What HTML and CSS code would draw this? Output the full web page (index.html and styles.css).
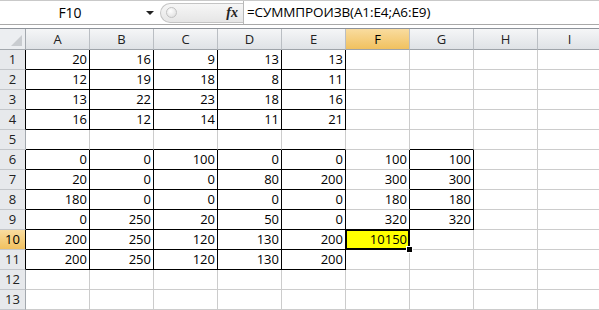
FILE: index.html
```html
<!DOCTYPE html>
<html lang="ru">
<head>
    <meta charset="UTF-8">
    <meta name="viewport" content="width=device-width, initial-scale=1.0">
    <title>СУММПРОИЗВ</title>
    <link rel="stylesheet" href="styles.css">
</head>
<body>
    <div class="fbar">
        <div class="namebox">F10</div>
        <div class="drop"><span class="arrow"></span></div>
        <div class="fx-area"><span class="grip"></span><span class="fx">fx</span></div>
        <div class="formula">=СУММПРОИЗВ(A1:E4;A6:E9)</div>
    </div>

    <div class="sheet">
        <div class="corner"></div><div class="h">A</div><div class="h">B</div><div class="h">C</div><div class="h">D</div><div class="h">E</div><div class="h sel">F</div><div class="h">G</div><div class="h">H</div><div class="h">I</div>

        <!-- A1:E4 -->
        <div class="r bk">1</div><div class="c br bb">20</div><div class="c br bb">16</div><div class="c br bb">9</div><div class="c br bb">13</div><div class="c br bb">13</div><div class="c"></div><div class="c"></div><div class="c"></div><div class="c"></div>
        <div class="r bk">2</div><div class="c br bb">12</div><div class="c br bb">19</div><div class="c br bb">18</div><div class="c br bb">8</div><div class="c br bb">11</div><div class="c"></div><div class="c"></div><div class="c"></div><div class="c"></div>
        <div class="r bk">3</div><div class="c br bb">13</div><div class="c br bb">22</div><div class="c br bb">23</div><div class="c br bb">18</div><div class="c br bb">16</div><div class="c"></div><div class="c"></div><div class="c"></div><div class="c"></div>
        <div class="r bk">4</div><div class="c br bb">16</div><div class="c br bb">12</div><div class="c br bb">14</div><div class="c br bb">11</div><div class="c br bb">21</div><div class="c"></div><div class="c"></div><div class="c"></div><div class="c"></div>
        <div class="r">5</div><div class="c bb"></div><div class="c bb"></div><div class="c bb"></div><div class="c bb"></div><div class="c bb"></div><div class="c"></div><div class="c bb"></div><div class="c"></div><div class="c"></div>

        <!-- A6:E11, G6:G9 -->
        <div class="r bk">6</div><div class="c br bb">0</div><div class="c br bb">0</div><div class="c br bb">100</div><div class="c br bb">0</div><div class="c br bb">0</div><div class="c br">100</div><div class="c br bb">100</div><div class="c"></div><div class="c"></div>
        <div class="r bk">7</div><div class="c br bb">20</div><div class="c br bb">0</div><div class="c br bb">0</div><div class="c br bb">80</div><div class="c br bb">200</div><div class="c br">300</div><div class="c br bb">300</div><div class="c"></div><div class="c"></div>
        <div class="r bk">8</div><div class="c br bb">180</div><div class="c br bb">0</div><div class="c br bb">0</div><div class="c br bb">0</div><div class="c br bb">0</div><div class="c br">180</div><div class="c br bb">180</div><div class="c"></div><div class="c"></div>
        <div class="r bk">9</div><div class="c br bb">0</div><div class="c br bb">250</div><div class="c br bb">20</div><div class="c br bb">50</div><div class="c br bb">0</div><div class="c br">320</div><div class="c br bb">320</div><div class="c"></div><div class="c"></div>
        <div class="r bk sel">10</div><div class="c br bb">200</div><div class="c br bb">250</div><div class="c br bb">120</div><div class="c br bb">130</div><div class="c br bb">200</div><div class="c cur">10150</div><div class="c"></div><div class="c"></div><div class="c"></div>
        <div class="r bk">11</div><div class="c br bb">200</div><div class="c br bb">250</div><div class="c br bb">120</div><div class="c br bb">130</div><div class="c br bb">200</div><div class="c"></div><div class="c"></div><div class="c"></div><div class="c"></div>
        <div class="r">12</div><div class="c"></div><div class="c"></div><div class="c"></div><div class="c"></div><div class="c"></div><div class="c"></div><div class="c"></div><div class="c"></div><div class="c"></div>
        <div class="r">13</div><div class="c"></div><div class="c"></div><div class="c"></div><div class="c"></div><div class="c"></div><div class="c"></div><div class="c"></div><div class="c"></div><div class="c"></div>
    </div>
</body>
</html>
```

FILE: styles.css
```css
body {
    margin: 0;
    width: 599px;
    height: 310px;
    overflow: hidden;
    background: #fff;
    font-family: "Open Sans", Arial, sans-serif;
    color: #000;
}

/* строка формул */
.fbar {
    display: flex;
    align-items: center;
    height: 23px;
    border-top: 1px solid #c9c9c9;
    border-bottom: 1px solid #a9a9a9;
    margin-bottom: 3px;
}

.namebox {
    width: 140px;
    text-align: center;
    font-size: 14px;
}

.drop {
    width: 20px;
    display: flex;
    justify-content: center;
}

.arrow {
    width: 0;
    height: 0;
    border-left: 4px solid transparent;
    border-right: 4px solid transparent;
    border-top: 4px solid #222;
}

.fx-area {
    box-sizing: border-box;
    width: 83px;
    height: 20px;
    display: flex;
    align-items: center;
    justify-content: space-between;
    padding: 0 5px 0 5px;
    background: linear-gradient(#f6f6f6, #e6e6e6);
    border: 1px solid #c4c4c4;
    border-right: none;
    border-radius: 11px 0 0 11px;
}

.grip {
    width: 9px;
    height: 9px;
    border-radius: 50%;
    border: 1px solid #c2c2c2;
    background: radial-gradient(circle at 40% 35%, #fff, #dadada);
}

.fx {
    font-family: "Liberation Serif", serif;
    font-style: italic;
    font-weight: bold;
    font-size: 14px;
    color: #222;
}

.formula {
    flex: 1;
    height: 23px;
    line-height: 23px;
    border-left: 1px solid #b8b8b8;
    padding-left: 3px;
    font-size: 13.5px;
    letter-spacing: -0.1px;
    white-space: nowrap;
}

/* лист */
.sheet {
    display: grid;
    grid-template-columns: 26px repeat(9, 64px);
    grid-template-rows: 21px repeat(13, 20px);
    border-top: 1px solid #8e939a;
    font-size: 13px;
}

.sheet > div {
    box-sizing: border-box;
}

.corner {
    display: flex;
    justify-content: flex-end;
    align-items: flex-end;
    padding: 0 3px 3px 0;
    background: #eceef1;
    border-right: 1px solid #a3a8ae;
    border-bottom: 1px solid #a3a8ae;
}

.corner::after {
    content: "";
    width: 0;
    height: 0;
    border-left: 11px solid transparent;
    border-bottom: 11px solid #c9ccd0;
}

.h {
    background: linear-gradient(#f5f6f7, #dfe2e6);
    border-right: 1px solid #babec3;
    border-bottom: 1px solid #9ea3a9;
    text-align: center;
    line-height: 20px;
    color: #222;
}

.r {
    background: #e7e9ec;
    border-right: 1px solid #a3a8ae;
    border-bottom: 1px solid #c3c6ca;
    text-align: center;
    line-height: 19px;
    color: #222;
}

.h.sel, .r.sel {
    background: linear-gradient(#f9dc9f, #f1c15f);
    color: #000;
}

.r.bk {
    border-right-color: #000;
}

.c {
    border-right: 1px solid #cccccc;
    border-bottom: 1px solid #cccccc;
    text-align: right;
    padding-right: 2px;
    line-height: 19px;
}

.br { border-right-color: #000; }
.bb { border-bottom-color: #000; }

/* активная ячейка */
.cur {
    position: relative;
    background: #ffff00;
}

.cur::after {
    content: "";
    position: absolute;
    left: -1px;
    top: -1px;
    right: -1px;
    bottom: -1px;
    border: 2px solid #000;
}

.cur::before {
    content: "";
    position: absolute;
    right: -4px;
    bottom: -4px;
    width: 5px;
    height: 5px;
    background: #000;
    border: 1px solid #fff;
    z-index: 1;
}
```
